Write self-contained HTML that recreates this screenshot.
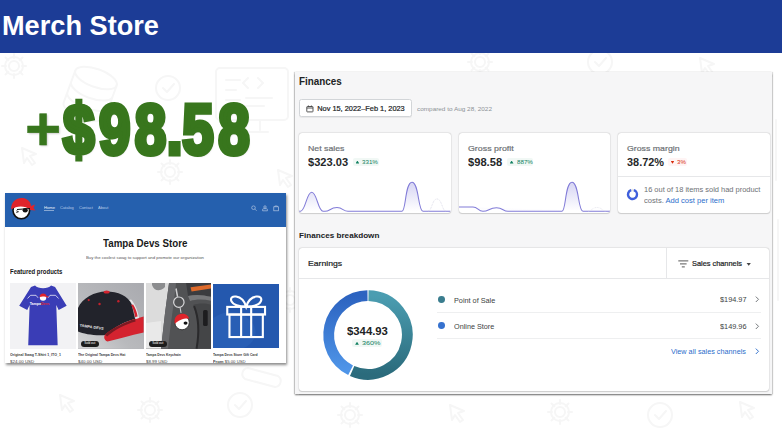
<!DOCTYPE html>
<html><head><meta charset="utf-8">
<style>
*{box-sizing:border-box;margin:0;padding:0}
html,body{width:782px;height:431px;overflow:hidden;background:#fff;font-family:"Liberation Sans",sans-serif}
.t{position:absolute;white-space:nowrap;transform-origin:0 50%;line-height:1}
.a{position:absolute}
#hdr{position:absolute;left:0;top:0;width:782px;height:52.9px;background:#1c3c96}
#title{left:2.2px;top:12.3px;font-size:28px;font-weight:bold;color:#fff;transform:scaleX(.97)}
#big{left:63px;top:96.4px;font-size:69.8px;font-weight:bold;color:#38761d;transform:scaleX(.81);-webkit-text-stroke:5px #38761d;letter-spacing:5.5px;text-shadow:1.5px 1.5px 2px rgba(0,0,0,.22)}
#big span{margin:0 -5.6px 0 -4.9px}
#plus{left:25px;top:98.2px;font-size:62px;font-weight:bold;color:#38761d;-webkit-text-stroke:.5px #38761d;text-shadow:1px 1px 2px rgba(0,0,0,.22)}
#store{position:absolute;left:5px;top:193px;width:281px;height:170.4px;background:#fff;box-shadow:1px 1.5px 2.5px rgba(0,0,0,.45)}
#snav{position:absolute;left:5px;top:193.4px;width:281px;height:33.2px;background:#2560ae}
.prod{position:absolute;top:283.3px;width:65.6px;height:65.5px;overflow:hidden}
.so{position:absolute;left:2.7px;bottom:2.2px;width:18px;height:5.6px;border-radius:3px;background:#1c1c1c;color:#fff;font-size:3px;line-height:5.6px;text-align:center}
#fin{position:absolute;left:295px;top:72.2px;width:477px;height:321.4px;background:#f6f6f7;box-shadow:0 1.5px 1.5px rgba(0,0,0,.42), 1px 0 1px rgba(0,0,0,.13), -1px 0 1px rgba(0,0,0,.16)}
.card{position:absolute;background:#fff;border-radius:3px;box-shadow:0 0 1.5px rgba(0,0,0,.28),0 .5px 1px rgba(0,0,0,.12)}
.bdg{position:absolute;height:8.2px;border-radius:2px;background:#f1f8f5}
.bdg.r{background:#fff4f4}
.hl{position:absolute;height:1px;background:#e6e7e9}
.tri{position:absolute;width:3.8px;height:3px;margin:-.2px 0 0 -.2px;background:#108060;clip-path:polygon(50% 0,100% 100%,0 100%)}
.tri.d{background:#d72c0d;clip-path:polygon(0 0,100% 0,50% 100%)}
</style></head>
<body>
<svg class="a" style="left:0;top:52px" width="782" height="379" viewBox="0 52 782 379" fill="none" stroke="#f6f6f6" stroke-width="2" stroke-linecap="round" stroke-linejoin="round">
 <defs>
  <g id="zgear"><circle r="5"/><path d="M0 -12v4M0 8v4M-12 0h4M8 0h4M-8.500 -8.500l2.800 2.800M5.700 5.700l2.800 2.800M-8.500 8.500l2.800 -2.800M5.700 -5.700l2.800 -2.800"/><circle r="9"/></g>
  <g id="zcur"><path d="M0 0l14 6-6 2 5 7-3 2-5-7-3 5z"/></g>
  <g id="zdb"><ellipse cx="0" cy="0" rx="22" ry="9"/><path d="M-22 0v34c0 5 10 9 22 9s22-4 22-9v-34M-22 12c0 5 10 9 22 9s22-4 22-9M-22 23c0 5 10 9 22 9s22-4 22-9"/></g>
  <g id="zmon"><rect x="0" y="0" width="72" height="52" rx="4"/><path d="M10 12h14M10 22h10M10 32h14M32 10l-5 5 5 5M42 10l5 5-5 5M30 30h26M30 38h18M28 52v10M44 52v10M20 64h32"/></g>
  <g id="zchk"><circle r="12"/><path d="M-5 0l4 4 7-8"/></g>
 </defs>
 <use href="#zgear" x="14" y="66"/><use href="#zdb" transform="translate(96 78) rotate(20)"/><use href="#zchk" x="168" y="88"/><use href="#zmon" x="216" y="68"/>
 <use href="#zcur" x="22" y="148"/><use href="#zgear" x="170" y="172"/><use href="#zgear" x="480" y="62"/><use href="#zchk" x="600" y="62"/><use href="#zcur" x="700" y="58"/>
 <use href="#zgear" x="150" y="410"/><use href="#zcur" x="60" y="395"/><use href="#zchk" x="240" y="405"/><use href="#zgear" x="350" y="415"/><use href="#zcur" x="450" y="405"/><use href="#zgear" x="560" y="412"/><use href="#zchk" x="660" y="415"/><use href="#zcur" x="740" y="402"/>
 <use href="#zgear" x="290" y="300" /><use href="#zcur" x="278" y="170"/>
 <path d="M248 368 l30 8 a6 6 0 0 1 -3 11 l-30 -8 a6 6 0 0 1 3 -11z"/>
 <path d="M776 120v60M778 220v80"/>
</svg>
<div id="hdr"><div id="title" class="t">Merch Store</div></div>
<div id="plus" class="t">+</div>
<div id="big" class="t">$98<span>.</span>58</div>

<div id="store"></div>
<div id="snav"></div>
<svg class="a" style="left:10px;top:195px" width="28" height="28" viewBox="0 0 28 28">
 <circle cx="11.3" cy="15.5" r="8.3" fill="#fff" stroke="#111" stroke-width="1.6"/>
 <path d="M1.2 14.5 C0.5 5 10 0.5 17 4.5 C20 6.2 21 9 21 11 L25 9.5 L23.5 13 L25.5 15.5 L20.5 15 C15 10.5 7 10.5 1.2 14.5Z" fill="#e0242b"/>
 <path d="M7 14.5 L20 13.5" stroke="#111" stroke-width="1"/>
 <ellipse cx="15.2" cy="15.3" rx="2.6" ry="2.2" fill="#111"/>
 <path d="M6.3 15.8 l2.2 .9 l-2.2 .9" stroke="#111" stroke-width=".8" fill="none"/>
</svg>
<div class="a" style="left:43.8px;top:210px;width:10.4px;height:1px;background:#fff;opacity:.45"></div>
<svg class="a" style="left:251.3px;top:205.4px" width="30" height="7" viewBox="0 0 30 7" fill="none" stroke="#d5dff1" stroke-width=".7" opacity=".8">
 <circle cx="2.500" cy="2.700" r="1.800"/><path d="M3.900 4.100L5.600 5.800"/>
 <circle cx="14" cy="2" r="1.200"/><path d="M11.600 5.800v-1.200a.9 .9 0 0 1 .9-.9h3a.9 .9 0 0 1 .9 .9v1.200z"/>
 <rect x="22.800" y="1.800" width="4.600" height="4"/><path d="M23.800 1.800v-.8h2.600v.8"/>
</svg>

<div class="prod" style="left:10.2px;background:#f2f2f4">
 <svg width="65.6" height="65.6" viewBox="0 0 65.5 65.5">
  <path d="M25 2.5 L21 4 L9.2 22.8 L17.2 27 L19.6 22 L18.2 62.2 L47.6 62.2 L46.2 22 L48.6 27 L56.6 22.8 L45 4 L41 2.5 C38 6.2 28 6.2 25 2.5Z" fill="#3a3db6"/>
  <path d="M17.5 15.5 l3 -3.2 h5.5 l2 2.5 M48.5 15.5 l-3 -3.2 h-5.5 l-2 2.5" stroke="#fff" stroke-width=".7" fill="none"/>
  <circle cx="33" cy="14.6" r="3.2" fill="#fff"/><path d="M29.5 14c.3-4.6 6.4-4.6 7.3-.6l1.8-.6-.8 2c-2.6-1.6-5.8-1.800-8.300-.8z" fill="#e0242b"/>
  <text x="19.6" y="21.8" font-size="3.6" font-weight="bold" fill="#fff" font-family="Liberation Sans, sans-serif">Tampa<tspan fill="#e0242b">Devs</tspan></text>
 </svg>
</div>
<div class="prod" style="left:78.1px;background:#b3b4b8">
 <svg width="65.6" height="65.6" viewBox="0 0 65.5 65.5">
  <defs><linearGradient id="hb" x1="1" y1="0" x2="0" y2="1"><stop offset="0" stop-color="#a9aaaf"/><stop offset=".6" stop-color="#b9babd"/><stop offset="1" stop-color="#d6d6d8"/></linearGradient></defs>
  <rect width="65.5" height="65.5" fill="url(#hb)"/>
  <path d="M0 25 C4 15 17 8.500 28 8.500 C40 8.500 50 13 53.500 21 L57 36 C48 38 36 44 28 52 C17 53 6 51 0 48.500Z" fill="#22232b"/>
  <path d="M27 51.500 C36 44 48 38.500 57 36 L65.500 33.500 L65.500 49.500 C52 52.500 40 56 29.500 58.500 C26 57 25.500 54 27 51.500Z" fill="#d4232f"/>
  <path d="M27 51.500 C36 44 48 38.500 57 36 L57.500 38.500 C48 41 37 46.500 29 53.500Z" fill="#7c1a22"/>
  <path d="M51 17 C54 19 57 28 57.500 36 L61 35 C60 28 57 21 53 16.500Z" fill="#e6e6e8"/>
  <path d="M53 22 C55 25 56.500 30 57 34 L59.500 33.500 C59 29 57 24.500 55 21.500Z" fill="#d4232f"/>
  <ellipse cx="28.600" cy="9" rx="3" ry="1.500" fill="#d4232f"/><circle cx="10.700" cy="17" r="1.100" fill="#c4202c"/><circle cx="21.500" cy="21" r="1.200" fill="#c4202c"/><circle cx="40.300" cy="18.300" r="1.200" fill="#c4202c"/>
  <text x="1.500" y="43.500" font-size="3.800" font-weight="bold" fill="#e8e8e8" transform="rotate(8 1.500 43.500)" font-family="Liberation Sans, sans-serif">TAMPA DEVS</text>
 </svg>
 <div class="so">Sold out</div>
</div>
<div class="prod" style="left:145.9px;background:#505153;width:65.2px">
 <svg width="65.6" height="65.6" viewBox="0 0 65.5 65.5">
  <rect width="65.5" height="65.5" fill="#515254"/>
  <path d="M0 0 L23 0 L19 30 L15 65.500 L0 65.500Z" fill="#dcdcdc"/>
  <path d="M6 2 C8 8 14 9 19 4 L19 0 L6 0Z" fill="#8b8c8e"/>
  <path d="M0 40 L15 38 L15 65.500 L0 65.500Z" fill="#e9e9e9"/>
  <path d="M23 0 L30 0 C28 20 24 45 22 65.500 L15 65.500 L19 30Z" fill="#66676a"/>
  <path d="M40 0 L65.500 0 L65.500 14 C58 12 48 11 42 13Z" fill="#3b3c3f"/>
  <path d="M44.500 4.200 L65.500 1.500 L65.500 5.500 L45.500 8.600Z" fill="#de6a2a"/>
  <path d="M42 13 C50 11 58 12 65.500 14 L65.500 18 C58 16 50 16 44 18Z" fill="#77787a"/>
  <path d="M47 22 C52 20 60 20 65.500 22 L65.500 65.500 L50 65.500 C53 50 52 35 47 22Z" fill="#444547"/>
  <path d="M48 23 c5 12 5 28 2.500 42.500" stroke="#2a2a2c" stroke-width="2" fill="none"/>
  <rect x="57" y="27" width="4.600" height="16" rx="1.500" fill="#1d1d1f"/>
  <circle cx="32.800" cy="19.200" r="5.200" fill="none" stroke="#d9d9db" stroke-width="1.200"/>
  <path d="M31.500 13.800 L30 5.500" stroke="#cfcfd1" stroke-width="1.500"/>
  <path d="M34 24.300 l1 5.500" stroke="#cfcfd1" stroke-width="1"/>
  <circle cx="36" cy="39.500" r="7.200" fill="#fff" stroke="#222" stroke-width=".8"/>
  <path d="M28.800 41 C27 33 33 29.500 38.500 31 C41 31.800 42.500 33.500 43 35.500 C38 35 32 37 28.800 41Z" fill="#e0242b"/>
  <ellipse cx="39.500" cy="40" rx="2" ry="1.600" fill="#111"/>
 </svg>
 <div class="so" style="left:2.9px">Sold out</div>
</div>
<div class="prod" style="left:213.3px;top:283.9px;height:64.3px;background:#2458ae;width:65.800px">
 <svg width="65.8" height="64.3" viewBox="0 0 65.5 64">
  <rect width="65.5" height="65.5" fill="#2458ae"/>
  <path d="M0 34 C14 24 30 26 40 40 C46 50 40 60 30 64 L0 64Z" fill="#2c63b8" opacity=".7"/>
  <g fill="none" stroke="#fff" stroke-width="2.100">
   <rect x="14.200" y="22.800" width="37.600" height="7.600"/><rect x="16.400" y="30.400" width="33.200" height="22.400"/>
   <path d="M28 22.800v30M38 22.800v30"/>
   <path d="M33 22.500 C29 9.500 15 10.500 18.500 17.500 C20.500 21.500 28 22.500 33 22.500 C38 22.500 45.500 21.500 47.500 17.500 C51 10.500 37 9.500 33 22.500Z"/>
  </g>
 </svg>
</div>

<div id="fin"></div>
<!-- date button -->
<div class="a" style="left:299px;top:99.3px;width:113.4px;height:18.2px;background:#fff;border:1px solid #d2d5d8;border-radius:2.5px;box-shadow:0 1px 0 rgba(0,0,0,.05)"></div>
<svg class="a" style="left:306.3px;top:105px" width="8" height="8" viewBox="0 0 8 8" fill="none" stroke="#444" stroke-width=".9"><rect x=".8" y="1.5" width="6.2" height="5.4" rx=".6"/><path d="M.8 3h6.2M2.4.5v1.4M5.4.5v1.4"/></svg>

<!-- cards -->
<div class="card" style="left:299.3px;top:133px;width:151.3px;height:79.8px;overflow:hidden">
 <svg class="a" style="left:0;top:40.3px" width="151.3" height="39.5" viewBox="0 0 151.3 39.5">
  <defs><linearGradient id="g1" x1="0" y1="0" x2="0" y2="1"><stop offset="0" stop-color="#8f8ae0" stop-opacity=".36"/><stop offset="1" stop-color="#8f8ae0" stop-opacity="0"/></linearGradient></defs>
  <path d="M0 38.3 L1.500 38.300 C6.500 38.300 7.500 19.300 12.700 19.300 C18 19.300 19 38.300 24 38.300 L26 38.300 C31 38.300 31 34.600 38 34.600 C44 34.6 44 38.3 49 38.3 L103 38.3 C107 38.3 106 9.3 113 9.3 C120 9.3 119 38.3 124 38.3 L151.3 38.3" fill="url(#g1)" stroke="#827cd8" stroke-width="1.05"/>
  <path d="M129 38 C133 38 133 26 138 26 C143 26 143 38 147 38" fill="none" stroke="#cfcfe0" stroke-width=".7" stroke-dasharray=".8 .8"/>
 </svg>
</div>
<div class="card" style="left:458.6px;top:133px;width:151.4px;height:79.8px;overflow:hidden">
 <svg class="a" style="left:0;top:40.3px" width="151.3" height="39.5" viewBox="0 0 151.3 39.5">
  <path d="M0 34 L14 34 C19 34 19 38.3 24 38.3 C30 38.3 30 34.8 37.5 34.8 C44 34.8 44 38.3 49 38.3 L103 38.3 C107 38.3 106 9.3 113 9.3 C120 9.3 119 38.3 124 38.3 L151.3 38.3" fill="url(#g1)" stroke="#827cd8" stroke-width="1.05"/>
  <path d="M129 38 C133 38 133 34.5 138 34.5 C143 34.5 143 38 147 38" fill="none" stroke="#dcdce8" stroke-width=".7" stroke-dasharray=".8 .8"/>
 </svg>
</div>
<div class="card" style="left:617.8px;top:133px;width:152px;height:80px">
 <div class="hl" style="left:0;top:43.3px;width:100%"></div>
 <svg class="a" style="left:7.9px;top:55.1px" width="13" height="13" viewBox="0 0 13 13"><circle cx="6.5" cy="6.5" r="4.5" fill="none" stroke="#e4e5e7" stroke-width="2.4"/><circle cx="6.5" cy="6.5" r="4.5" fill="none" stroke="#3f5fdd" stroke-width="2.4" stroke-dasharray="24.8 3.5" transform="rotate(-72 6.5 6.5)"/></svg>
</div>
<div class="bdg" style="left:352.6px;top:158px;width:26.6px"></div><div class="tri" style="left:355.7px;top:160.8px"></div>
<div class="bdg" style="left:506.8px;top:158px;width:26.6px"></div><div class="tri" style="left:509.9px;top:160.8px"></div>
<div class="bdg r" style="left:667.7px;top:158px;width:19.7px"></div><div class="tri d" style="left:670.8px;top:160.9px"></div>

<!-- earnings -->
<div class="card" style="left:298.7px;top:247.9px;width:470.7px;height:143px">
 <div class="hl" style="left:0;top:30.4px;width:100%"></div>
 <div class="a" style="left:367.2px;top:0;width:1px;height:30.4px;background:#e6e7e9"></div>
 <svg class="a" style="left:378.9px;top:12px" width="11" height="8" viewBox="0 0 11 8" stroke="#444" stroke-width=".9"><path d="M.3 .9h10M2 3.9h6.6M3.8 6.9h3"/></svg>
 <div class="a" style="left:447.7px;top:14.9px;width:4.7px;height:2.9px;background:#444;clip-path:polygon(0 0,100% 0,50% 100%)"></div>
 <svg class="a" style="left:21px;top:39.4px" width="96" height="96" viewBox="-48 -48 96 96">
  <defs>
   <linearGradient id="ga" x1="0" y1="0" x2="0" y2="1"><stop offset="0" stop-color="#4b9db1"/><stop offset="1" stop-color="#2b6b7c"/></linearGradient>
   <linearGradient id="gb" x1="0" y1="0" x2="0" y2="1"><stop offset="0" stop-color="#2c63c0"/><stop offset="1" stop-color="#4f95e8"/></linearGradient>
  </defs>
  <path d="M0.48 -39.3 A39.3 39.3 0 1 1 -15.86 35.96" fill="none" stroke="url(#ga)" stroke-width="10.8"/>
  <path d="M-17.41 35.23 A39.3 39.3 0 0 1 -0.48 -39.3" fill="none" stroke="url(#gb)" stroke-width="10.8"/>
 </svg>
 <div class="a" style="left:139.7px;top:48px;width:6.8px;height:6.8px;border-radius:50%;background:#3a7d8e"></div>
 <div class="a" style="left:139.7px;top:74.6px;width:6.8px;height:6.8px;border-radius:50%;background:#3672cf"></div>
 <div class="hl" style="left:138.3px;top:64.3px;width:323.7px;background:#eeeff0"></div>
 <div class="hl" style="left:138.3px;top:90.3px;width:323.7px;background:#eeeff0"></div>
 <svg class="a" style="left:456.8px;top:48.6px" width="5" height="8" viewBox="0 0 5 8" fill="none" stroke="#6d7175" stroke-width=".95"><path d="M.8 .6l2.700 2.700-2.700 2.700"/></svg>
 <svg class="a" style="left:456.8px;top:75.0px" width="5" height="8" viewBox="0 0 5 8" fill="none" stroke="#6d7175" stroke-width=".95"><path d="M.8 .6l2.700 2.700-2.700 2.700"/></svg>
 <svg class="a" style="left:456.8px;top:100.19999999999999px" width="5" height="8" viewBox="0 0 5 8" fill="none" stroke="#2c6ecb" stroke-width=".95"><path d="M.8 .6l2.700 2.700-2.700 2.700"/></svg>
</div>
<div class="bdg" style="left:352.1px;top:339.1px;width:30.1px;height:8px"></div><div class="tri" style="left:355.3px;top:341.9px"></div>

<div class="t" id="n1" style="left:43.8px;top:205.74px;font-size:4.2px;font-weight:normal;color:#eef3fb;transform:scaleX(0.985);">Home</div>
<div class="t" id="n2" style="left:59.7px;top:205.74px;font-size:4.2px;font-weight:normal;color:#b9cbe8;transform:scaleX(0.956);">Catalog</div>
<div class="t" id="n3" style="left:78.5px;top:205.74px;font-size:4.2px;font-weight:normal;color:#b9cbe8;transform:scaleX(0.956);">Contact</div>
<div class="t" id="n4" style="left:97.6px;top:205.74px;font-size:4.2px;font-weight:normal;color:#b9cbe8;transform:scaleX(0.950);">About</div>
<div class="t" id="st" style="left:102.6px;top:239.08px;font-size:10.3px;font-weight:bold;color:#1a1a1a;transform:scaleX(0.947);">Tampa Devs Store</div>
<div class="t" id="sg" style="left:85.7px;top:256.48px;font-size:4.4px;font-weight:normal;color:#555;transform:scaleX(0.976);">Buy the coolest swag to support and promote our organization</div>
<div class="t" id="fp" style="left:10.1px;top:268.87px;font-size:6.3px;font-weight:bold;color:#161616;transform:scaleX(0.948);">Featured products</div>
<div class="t" id="pn1" style="left:10.4px;top:353.67px;font-size:3.7px;font-weight:bold;color:#3a3a3a;transform:scaleX(0.969);">Original Swag T-Shirt 1_ITO_1</div>
<div class="t" id="pn2" style="left:78.0px;top:353.67px;font-size:3.7px;font-weight:bold;color:#3a3a3a;transform:scaleX(0.928);">The Original Tampa Devs Hat</div>
<div class="t" id="pn3" style="left:145.9px;top:353.67px;font-size:3.7px;font-weight:bold;color:#3a3a3a;transform:scaleX(0.893);">Tampa Devs Keychain</div>
<div class="t" id="pn4" style="left:213.3px;top:353.67px;font-size:3.7px;font-weight:bold;color:#3a3a3a;transform:scaleX(0.916);">Tampa Devs Store Gift Card</div>
<div class="t" id="pp1" style="left:10.4px;top:359.98px;font-size:4.4px;font-weight:normal;color:#444;transform:scaleX(1.016);">$24.00 USD</div>
<div class="t" id="pp2" style="left:78.0px;top:359.98px;font-size:4.4px;font-weight:normal;color:#444;transform:scaleX(1.016);">$40.00 USD</div>
<div class="t" id="pp3" style="left:145.9px;top:359.98px;font-size:4.4px;font-weight:normal;color:#444;transform:scaleX(0.996);">$8.99 USD</div>
<div class="t" id="pp4" style="left:213.3px;top:359.98px;font-size:4.4px;font-weight:normal;color:#444;transform:scaleX(0.968);"><b>From</b> $5.00 USD</div>
<div class="t" id="f1" style="left:299.1px;top:76.73px;font-size:10px;font-weight:bold;color:#202223;transform:scaleX(0.985);">Finances</div>
<div class="t" id="f2" style="left:317.2px;top:105.04px;font-size:7.4px;font-weight:normal;-webkit-text-stroke:.2px;color:#202223;transform:scaleX(1.000);">Nov 15, 2022–Feb 1, 2023</div>
<div class="t" id="f3" style="left:417.0px;top:107.24px;font-size:5.5px;font-weight:normal;color:#8c9196;transform:scaleX(1.162);">compared to Aug 28, 2022</div>
<div class="t" id="c1l" style="left:308.0px;top:145.34px;font-size:8.1px;font-weight:normal;-webkit-text-stroke:.2px;color:#6d7175;transform:scaleX(1.079);">Net sales</div>
<div class="t" id="c1v" style="left:308.0px;top:157.58px;font-size:10.3px;font-weight:bold;color:#26282a;transform:scaleX(1.077);">$323.03</div>
<div class="t" id="c1b" style="left:362.4px;top:160.16px;font-size:5.6px;font-weight:normal;color:#108060;transform:scaleX(1.111);">331%</div>
<div class="t" id="c2l" style="left:467.9px;top:145.34px;font-size:8.1px;font-weight:normal;-webkit-text-stroke:.2px;color:#6d7175;transform:scaleX(1.092);">Gross profit</div>
<div class="t" id="c2v" style="left:468.0px;top:157.58px;font-size:10.3px;font-weight:bold;color:#26282a;transform:scaleX(1.083);">$98.58</div>
<div class="t" id="c2b" style="left:516.6px;top:160.16px;font-size:5.6px;font-weight:normal;color:#108060;transform:scaleX(1.111);">887%</div>
<div class="t" id="c3l" style="left:626.6px;top:145.34px;font-size:8.1px;font-weight:normal;-webkit-text-stroke:.2px;color:#6d7175;transform:scaleX(1.083);">Gross margin</div>
<div class="t" id="c3v" style="left:626.6px;top:157.58px;font-size:10.3px;font-weight:bold;color:#26282a;transform:scaleX(1.059);">38.72%</div>
<div class="t" id="c3b" style="left:677.3px;top:160.16px;font-size:5.6px;font-weight:normal;color:#d72c0d;transform:scaleX(1.087);">3%</div>
<div class="t" id="c3t1" style="left:644.0px;top:186.56px;font-size:6.9px;font-weight:normal;color:#6d7175;transform:scaleX(1.081);">16 out of 18 items sold had product</div>
<div class="t" id="c3t2" style="left:644.0px;top:197.96px;font-size:6.9px;font-weight:normal;color:#6d7175;transform:scaleX(1.099);">costs. <span style="color:#2c6ecb">Add cost per item</span></div>
<div class="t" id="fb" style="left:299.1px;top:232.18px;font-size:7.7px;font-weight:bold;color:#202223;transform:scaleX(1.057);">Finances breakdown</div>
<div class="t" id="ea" style="left:307.7px;top:260.13px;font-size:8px;font-weight:normal;-webkit-text-stroke:.2px;color:#202223;transform:scaleX(1.080);">Earnings</div>
<div class="t" id="sc" style="left:692.0px;top:260.27px;font-size:7px;font-weight:normal;-webkit-text-stroke:.2px;color:#202223;transform:scaleX(1.053);">Sales channels</div>
<div class="t" id="dv" style="left:347.0px;top:326.60px;font-size:10.4px;font-weight:bold;color:#202223;transform:scaleX(1.089);">$344.93</div>
<div class="t" id="db" style="left:362.3px;top:341.19px;font-size:5.8px;font-weight:normal;color:#108060;transform:scaleX(1.248);">360%</div>
<div class="t" id="r1" style="left:453.8px;top:296.67px;font-size:7px;font-weight:normal;color:#3c3f42;transform:scaleX(1.040);">Point of Sale</div>
<div class="t" id="r2" style="left:453.8px;top:322.77px;font-size:7px;font-weight:normal;color:#3c3f42;transform:scaleX(1.035);">Online Store</div>
<div class="t" id="a1" style="left:719.6px;top:296.83px;font-size:6.7px;font-weight:normal;color:#3c3f42;transform:scaleX(1.096);">$194.97</div>
<div class="t" id="a2" style="left:719.6px;top:324.03px;font-size:6.7px;font-weight:normal;color:#3c3f42;transform:scaleX(1.096);">$149.96</div>
<div class="t" id="va" style="left:671.2px;top:347.97px;font-size:7px;font-weight:normal;color:#2c6ecb;transform:scaleX(1.037);">View all sales channels</div>
</body></html>
